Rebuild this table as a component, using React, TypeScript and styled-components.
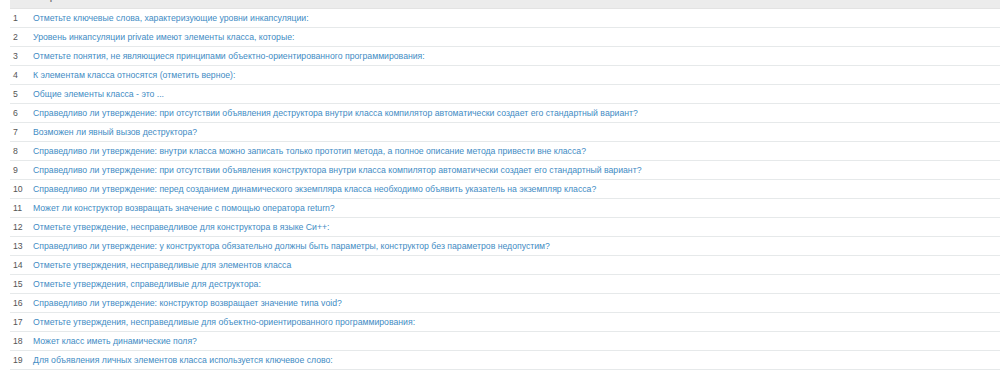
import React from 'react';
import styled, {createGlobalStyle} from 'styled-components';

const GlobalStyle = createGlobalStyle`
    html, body {
        margin: 0;
        padding: 0;
        background: #fff;
    }
    body {
        font-family: "Liberation Sans", Arial, sans-serif;
    }
`;

const Page = styled.div`
    width: 1000px;
    height: 376px;
    overflow: hidden;
    padding-left: 10px;
    box-sizing: border-box;
`;

// table is scrolled so only the bottom strip of its header shows
const Table = styled.table`
    width: 990px;
    border-collapse: collapse;
    font-size: 8.7px;
    margin-top: -11px;
`;

const HeadRow = styled.tr`
    background: #ececec;
    height: 19px;
`;

const HeadCell = styled.th<{$align?: 'left' | 'right'}>`
    padding: 0 3px 6px;
    text-align: ${(p) => p.$align ?? 'left'};
    vertical-align: bottom;
    font-weight: bold;
    color: #777;
    border-bottom: 1px solid #e3e3e3;
`;

const Row = styled.tr`
    height: 19px;
    border-bottom: 1px solid #e6e9ea;
`;

const NumCell = styled.td`
    width: 14px;
    padding: 0 3px;
    color: #555;
    vertical-align: middle;
`;

const TextCell = styled.td`
    padding: 0 3px;
    vertical-align: middle;
`;

const QuestionLink = styled.a`
    color: #3f8cc4;
    text-decoration: none;
`;

const questions = [
    'Отметьте ключевые слова, характеризующие уровни инкапсуляции:',
    'Уровень инкапсуляции private имеют элементы класса, которые:',
    'Отметьте понятия, не являющиеся принципами объектно-ориентированного программирования:',
    'К элементам класса относятся (отметить верное):',
    'Общие элементы класса - это ...',
    'Справедливо ли утверждение: при отсутствии объявления деструктора внутри класса компилятор автоматически создает его стандартный вариант?',
    'Возможен ли явный вызов деструктора?',
    'Справедливо ли утверждение: внутри класса можно записать только прототип метода, а полное описание метода привести вне класса?',
    'Справедливо ли утверждение: при отсутствии объявления конструктора внутри класса компилятор автоматически создает его стандартный вариант?',
    'Справедливо ли утверждение: перед созданием динамического экземпляра класса необходимо объявить указатель на экземпляр класса?',
    'Может ли конструктор возвращать значение с помощью оператора return?',
    'Отметьте утверждение, несправедливое для конструктора в языке Си++:',
    'Справедливо ли утверждение: у конструктора обязательно должны быть параметры, конструктор без параметров недопустим?',
    'Отметьте утверждения, несправедливые для элементов класса',
    'Отметьте утверждения, справедливые для деструктора:',
    'Справедливо ли утверждение: конструктор возвращает значение типа void?',
    'Отметьте утверждения, несправедливые для объектно-ориентированного программирования:',
    'Может класс иметь динамические поля?',
    'Для объявления личных элементов класса используется ключевое слово:',
];

export default function App() {
    return (
        <>
            <GlobalStyle/>
            <Page>
                <Table>
                    <thead>
                        <HeadRow>
                            <HeadCell>№</HeadCell>
                            <HeadCell>Вопрос</HeadCell>
                            <HeadCell $align='right'>Ответ</HeadCell>
                        </HeadRow>
                    </thead>
                    <tbody>
                        {questions.map((q, i) => (
                            <Row key={i}>
                                <NumCell>{i + 1}</NumCell>
                                <TextCell>
                                    <QuestionLink href='#'>{q}</QuestionLink>
                                </TextCell>
                                <TextCell/>
                            </Row>
                        ))}
                    </tbody>
                </Table>
            </Page>
        </>
    );
}
